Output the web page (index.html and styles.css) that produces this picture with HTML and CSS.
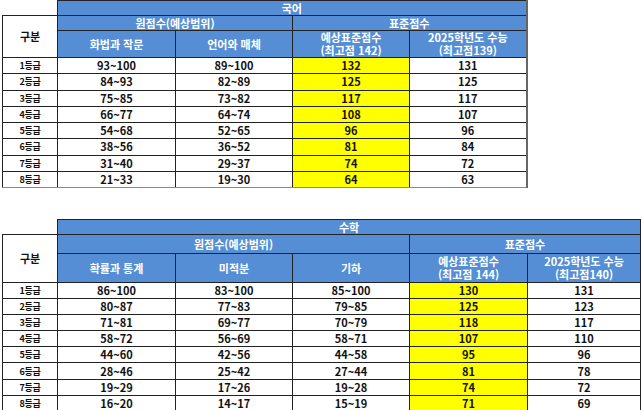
FILE: index.html
```html
<!DOCTYPE html>
<html lang="ko">
<head>
<meta charset="utf-8">
<link rel="stylesheet" href="styles.css">
</head>
<body>
<div class="page">
  <table class="grid t1">
    <colgroup><col class="c-label"><col class="c118"><col class="c117"><col class="c117"><col class="c117"></colgroup>
    <tr class="h1">
      <td class="blank"></td>
      <th colspan="4" class="subject">국어</th>
    </tr>
    <tr class="h2">
      <td rowspan="2" class="label-head">구분</td>
      <th colspan="2">원점수(예상범위)</th>
      <th colspan="2">표준점수</th>
    </tr>
    <tr class="h3 h3a">
      <th>화법과 작문</th>
      <th>언어와 매체</th>
      <th>예상표준점수<br>(최고점 142)</th>
      <th>2025학년도 수능<br>(최고점139)</th>
    </tr>
    <tr class="r1"><td class="lab">1등급</td><td>93~100</td><td>89~100</td><td class="hl">132</td><td>131</td></tr>
    <tr class="r1"><td class="lab">2등급</td><td>84~93</td><td>82~89</td><td class="hl">125</td><td>125</td></tr>
    <tr class="r1"><td class="lab">3등급</td><td>75~85</td><td>73~82</td><td class="hl">117</td><td>117</td></tr>
    <tr class="r1"><td class="lab">4등급</td><td>66~77</td><td>64~74</td><td class="hl">108</td><td>107</td></tr>
    <tr class="r1"><td class="lab">5등급</td><td>54~68</td><td>52~65</td><td class="hl">96</td><td>96</td></tr>
    <tr class="r1"><td class="lab">6등급</td><td>38~56</td><td>36~52</td><td class="hl">81</td><td>84</td></tr>
    <tr class="r1"><td class="lab">7등급</td><td>31~40</td><td>29~37</td><td class="hl">74</td><td>72</td></tr>
    <tr class="r1"><td class="lab">8등급</td><td>21~33</td><td>19~30</td><td class="hl">64</td><td>63</td></tr>
  </table>

  <table class="grid t2">
    <colgroup><col class="c-label"><col class="c118"><col class="c117"><col class="c117"><col class="c118"><col class="c113"></colgroup>
    <tr class="h1">
      <td class="blank"></td>
      <th colspan="5" class="subject">수학</th>
    </tr>
    <tr class="h2b">
      <td rowspan="2" class="label-head">구분</td>
      <th colspan="3">원점수(예상범위)</th>
      <th colspan="2">표준점수</th>
    </tr>
    <tr class="h3 h3b">
      <th>확률과 통계</th>
      <th>미적분</th>
      <th>기하</th>
      <th>예상표준점수<br>(최고점 144)</th>
      <th>2025학년도 수능<br>(최고점140)</th>
    </tr>
    <tr class="r2"><td class="lab">1등급</td><td>86~100</td><td>83~100</td><td>85~100</td><td class="hl">130</td><td>131</td></tr>
    <tr class="r2"><td class="lab">2등급</td><td>80~87</td><td>77~83</td><td>79~85</td><td class="hl">125</td><td>123</td></tr>
    <tr class="r2"><td class="lab">3등급</td><td>71~81</td><td>69~77</td><td>70~79</td><td class="hl">118</td><td>117</td></tr>
    <tr class="r2"><td class="lab">4등급</td><td>58~72</td><td>56~69</td><td>58~71</td><td class="hl">107</td><td>110</td></tr>
    <tr class="r2"><td class="lab">5등급</td><td>44~60</td><td>42~56</td><td>44~58</td><td class="hl">95</td><td>96</td></tr>
    <tr class="r2"><td class="lab">6등급</td><td>28~46</td><td>25~42</td><td>27~44</td><td class="hl">81</td><td>78</td></tr>
    <tr class="r2"><td class="lab">7등급</td><td>19~29</td><td>17~26</td><td>19~28</td><td class="hl">74</td><td>72</td></tr>
    <tr class="r2"><td class="lab">8등급</td><td>16~20</td><td>14~17</td><td>15~19</td><td class="hl">71</td><td>69</td></tr>
  </table>
</div>
</body>
</html>
```

FILE: styles.css
```css
html, body {
  margin: 0;
  padding: 0;
  background: #ffffff;
}
.page {
  padding: 0 0 0 2px;
  font-family: "Noto Sans CJK KR", "Noto Sans", sans-serif;
  font-weight: 700;
  color: #111111;
}
.grid {
  border-collapse: collapse;
  table-layout: fixed;
}
.t1 {
  width: 524px;
}
.t2 {
  width: 639px;
  margin-top: 31px;
}
.c-label { width: 55px; }
.c118 { width: 118px; }
.c117 { width: 117px; }
.c113 { width: 113px; }

.grid td, .grid th {
  padding: 0;
  border: 1px solid #222222;
  text-align: center;
  vertical-align: middle;
  overflow: hidden;
  white-space: nowrap;
}
.grid th {
  background: #558ed5;
  color: #ffffff;
  font-size: 11px;
  line-height: 13px;
  font-weight: 700;
}
.grid td.blank {
  border: none;
  background: #ffffff;
}
.h1 { height: 15px; }
.h2 { height: 15px; }
.h2b { height: 19px; }
.h3a { height: 27px; }
.h3b { height: 29px; }
.h3 th { font-size: 11px; line-height: 13px; }
.grid th.subject {
  font-size: 11px;
  line-height: 12px;
}
.label-head {
  font-size: 10px;
  line-height: 12px;
  background: #ffffff;
}
.r1 { height: 16.25px; }
.r2 { height: 16.1px; }
.grid td {
  font-size: 11px;
  line-height: 13px;
  background: #ffffff;
}
.grid td.lab {
  font-size: 9px;
  letter-spacing: -0.3px;
}
.grid td.hl {
  background: #ffff00;
}
.t1 tr > *:last-child {
  border-right: 2px solid #666666;
}
.t1 tr:last-child td {
  border-bottom: 1px solid #888888;
}
```
